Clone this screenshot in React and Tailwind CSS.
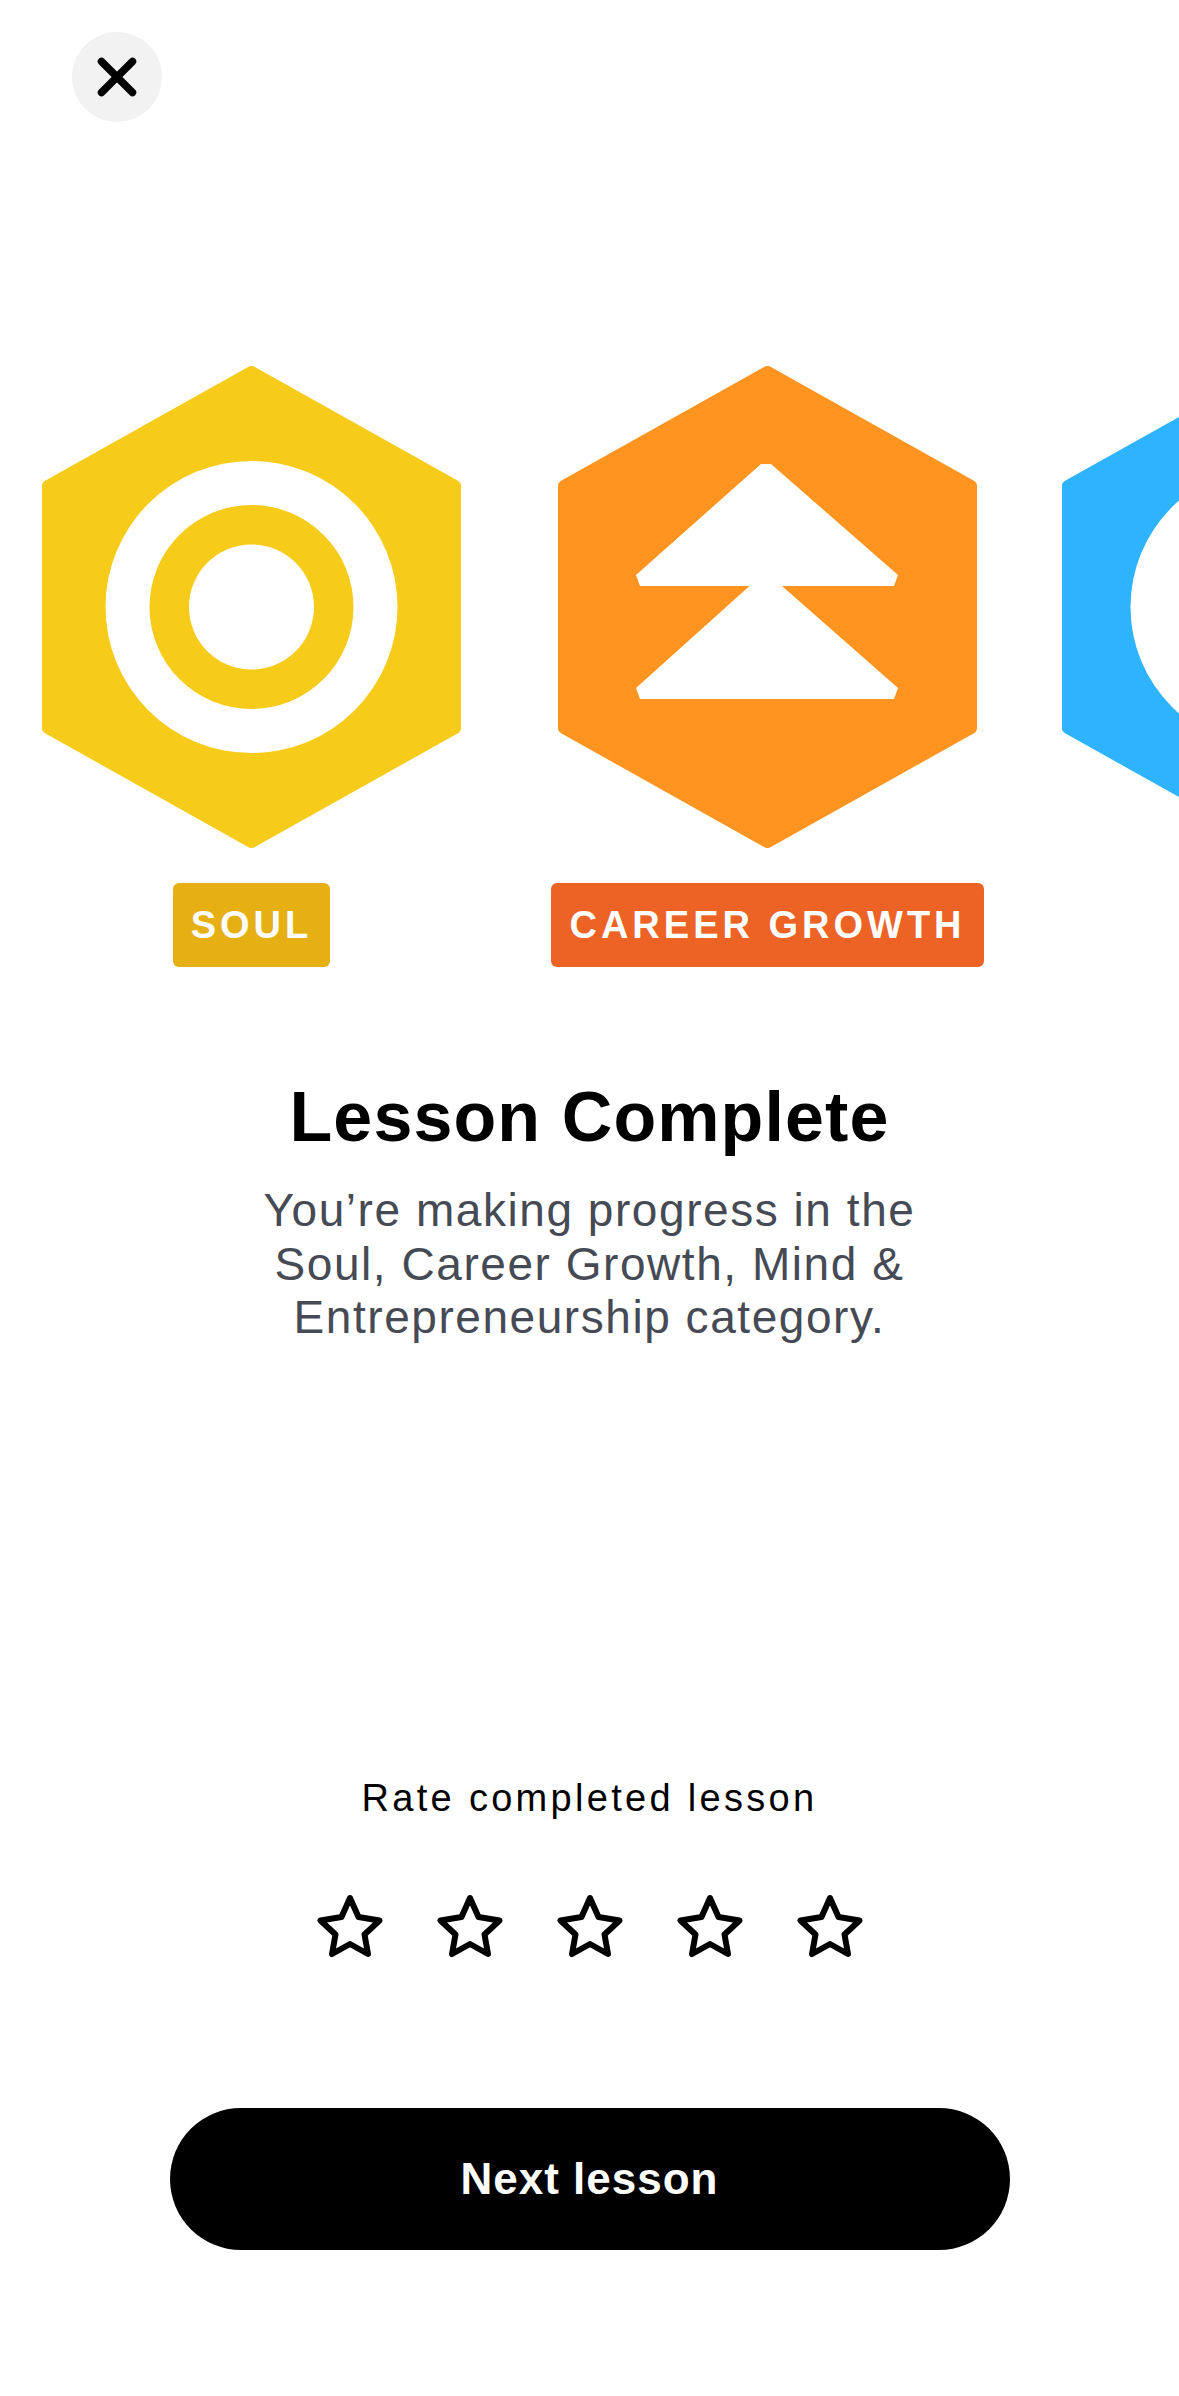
import { X } from "lucide-react";

const HEX_POINTS = "209.5,6 413,120 413,362 209.5,476 6,362 6,120";

const SoulIcon = () => (
  <>
    <circle cx="209.5" cy="241" r="146" fill="#fff" />
    <circle cx="209.5" cy="241" r="102" fill="#f6cb19" />
    <circle cx="209.5" cy="241" r="62.5" fill="#fff" />
  </>
);

const CareerIcon = () => (
  <path
    d="M203 98H213L340 209L336 220H224L340 322L336 333H82L78 322L191.5 220H82L78 209Z"
    fill="#fff"
  />
);

const MindIcon = () => <circle cx="209.5" cy="241" r="141" fill="#fff" />;

const categories = [
  { id: "soul", name: "SOUL", hex: "#f6cb19", badge: "bg-[#e6af13]", space: "mr-[97px]", Icon: SoulIcon },
  { id: "career", name: "CAREER GROWTH", hex: "#ff9520", badge: "bg-[#ec6325]", space: "mr-[85px]", Icon: CareerIcon },
  { id: "mind", hex: "#2eb4ff", Icon: MindIcon },
];

const Star = () => (
  <svg width="66" height="64" viewBox="-33 0 66 64" fill="none">
    <path
      d="M0 4L8.5 23L29.5 26.5L14.5 40.5L18 60L0 50L-18 60L-14.5 40.5L-29.5 26.5L-8.5 23Z"
      stroke="#000"
      strokeWidth="6"
      strokeLinejoin="round"
    />
  </svg>
);

export default function App() {
  return (
    <div className="w-[1179px] h-[2396px] bg-white overflow-hidden flex flex-col font-['Liberation_Sans',sans-serif]">
      {/* Close */}
      <button className="ml-[72px] mt-[32px] w-[90px] h-[90px] shrink-0 rounded-full bg-[#f2f2f2] flex items-center justify-center text-black">
        <X size={62} strokeWidth={2.9} />
      </button>

      {/* Category carousel */}
      <div className="mt-[244px] pl-[42px] flex">
        {categories.map(({ id, name, hex, badge, space, Icon }) => (
          <div key={id} className={`w-[419px] shrink-0 flex flex-col items-center ${space || ""}`}>
            <svg width="419" height="482" viewBox="0 0 419 482">
              <polygon points={HEX_POINTS} fill={hex} stroke={hex} strokeWidth="12" strokeLinejoin="round" />
              <Icon />
            </svg>
            {name && (
              <div className={`mt-[35px] h-[84px] pl-[18px] pr-[18px] shrink-0 rounded-[6px] flex items-center whitespace-nowrap text-white font-bold text-[38px] tracking-[4px] ${badge}`}>
                {name}
              </div>
            )}
          </div>
        ))}
      </div>

      {/* Message */}
      <h1 className="mt-[110px] text-center text-black font-bold text-[70px] leading-[80px] tracking-[1.1px]">
        Lesson Complete
      </h1>
      <p className="mt-[27px] mx-auto w-[760px] text-center text-[#454a54] text-[46px] leading-[53.5px] tracking-[1.55px]">
        You’re making progress in the
        <br />
        Soul, Career Growth, Mind &amp;
        <br />
        Entrepreneurship category.
      </p>

      {/* Rating */}
      <div className="mt-[431px] text-center text-black text-[38px] leading-[44px] tracking-[3.3px]">
        Rate completed lesson
      </div>
      <div className="mt-[74px] flex justify-center gap-[54px]">
        {[0, 1, 2, 3, 4].map((i) => (
          <Star key={i} />
        ))}
      </div>

      {/* Next */}
      <button className="mt-[150px] mx-auto w-[840px] h-[142px] shrink-0 rounded-[71px] bg-black text-white font-bold text-[44px] tracking-[1px]">
        Next lesson
      </button>
    </div>
  );
}
